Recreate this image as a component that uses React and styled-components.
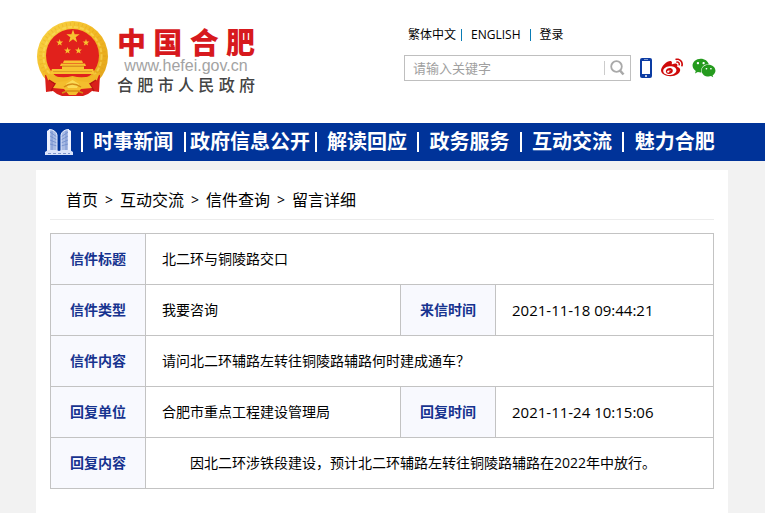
import React from "react";
import styled, { createGlobalStyle } from "styled-components";
import { FaWeibo, FaWeixin } from "react-icons/fa";

const GlobalStyle = createGlobalStyle`
  *, *::before, *::after { box-sizing: border-box; }
  body {
    margin: 0;
    background: #f2f2f2;
    color: #000;
    font-family: "Open Sans", "Noto Sans CJK SC", sans-serif;
    font-size: 14px;
  }
  a { color: inherit; text-decoration: none; }
`;

const Page = styled.div`
  display: flex;
  flex-direction: column;
  min-height: 100vh;
`;

const Container = styled.div`
  width: 100%;
  max-width: 1200px;
  margin: 0 auto;
  padding: 0 37px 0 36px;
`;

const Header = styled.header`
  background: #fff;
`;

const HeaderRow = styled(Container)`
  display: flex;
  justify-content: space-between;
  align-items: flex-start;
  padding-top: 20px;
  padding-bottom: 26px;
`;

const Brand = styled.a`
  display: flex;
  gap: 8px;
`;

const BrandText = styled.div`
  display: flex;
  flex-direction: column;
  width: 138px;
  padding-top: 6px;
`;

const SpreadText = styled.div`
  display: flex;
  justify-content: space-between;
  color: ${(p) => p.$color};
  font-family: "Noto Sans CJK SC", sans-serif;
  font-size: ${(p) => p.$size}px;
  font-weight: ${(p) => p.$weight};
  line-height: ${(p) => p.$line}px;
`;

const SiteAddress = styled.div`
  color: #a3a3a3;
  font: 16px/18px "Liberation Sans", Arial, sans-serif;
  text-align: center;
`;

const Tools = styled.div`
  display: flex;
  flex-direction: column;
  gap: 12px;
  width: 324px;
  padding-top: 7px;
`;

const QuickLinks = styled.nav`
  display: flex;
  align-items: center;
  padding-left: 4px;
  font-size: 12px;
  line-height: 16px;
`;

const QuickDivider = styled.span`
  width: 1px;
  height: 12px;
  margin: 0 9px 0 ${(p) => (p.$tight ? 5 : 9)}px;
  background: #0a7cb5;
`;

const ToolRow = styled.div`
  display: flex;
  align-items: center;
  gap: 9px;
`;

const SearchForm = styled.form`
  display: flex;
  align-items: center;
  width: 227px;
  height: 26px;
  border: 1px solid #bfbfbf;
`;

const SearchInput = styled.input`
  flex: 1;
  min-width: 0;
  padding: 0 8px;
  border: 0;
  outline: 0;
  background: transparent;
  font: 13px/20px "Open Sans", "Noto Sans CJK SC", sans-serif;
  &::placeholder { color: #a0a0a0; opacity: 1; }
`;

const SearchButton = styled.button`
  display: flex;
  align-items: center;
  justify-content: center;
  width: 26px;
  height: 14px;
  padding: 0;
  border: 0;
  border-left: 1px solid #ccc;
  background: transparent;
`;

const IconLink = styled.a`
  display: flex;
  color: ${(p) => p.$color};
`;

const MainNav = styled.nav`
  background: #039;
`;

const NavRow = styled(Container)`
  display: grid;
  grid-template-columns: 45px 1fr 131px repeat(4, 1fr);
  align-items: center;
  height: 38px;
  padding-right: 40px;
`;

const HomeLink = styled.a`
  display: flex;
  padding-left: 9px;
`;

const NavLink = styled.a`
  border-left: 2px solid #fff;
  color: #fff;
  font-size: 20px;
  font-weight: 700;
  line-height: 20px;
  text-align: center;
  white-space: nowrap;
`;

const Body = styled(Container)`
  display: flex;
  flex: 1;
  margin-top: 9px;
`;

const Panel = styled.main`
  flex: 1;
  padding: 0 14px 24px;
  background: #fff;
`;

const Breadcrumb = styled.nav`
  display: flex;
  gap: 7px;
  height: 50px;
  margin-bottom: 13px;
  padding: 18px 16px 0;
  border-bottom: 1px solid #ececec;
  font-size: 16px;
  line-height: 24px;
`;

const Arrow = styled.span`
  font-size: 14px;
`;

const Letter = styled.table`
  width: 100%;
  border-collapse: collapse;
  table-layout: fixed;
`;

const LabelCol = styled.col`
  width: 95px;
`;

const ValueCol = styled.col`
  width: 255px;
`;

const Label = styled.th`
  height: 51px;
  padding: 0;
  border: 1px solid #c3c3c3;
  background: #f8f9fe;
  color: #17338f;
  font-size: 14px;
  font-weight: 700;
  line-height: 20px;
`;

const Value = styled.td`
  padding: 0 16px;
  border: 1px solid #c3c3c3;
  line-height: 20px;
  text-indent: ${(p) => (p.$indent ? "2em" : "0")};
`;

const TimeValue = styled(Value)`
  font-size: 15px;
`;

const starPoints = (cx, cy, r) =>
  Array.from({ length: 10 }, (_, i) => {
    const a = (Math.PI / 5) * i - Math.PI / 2;
    const d = i % 2 ? r * 0.4 : r;
    return `${cx + d * Math.cos(a)},${cy + d * Math.sin(a)}`;
  }).join(" ");

const Emblem = () => (
  <svg width="73" height="77" viewBox="0 0 73 77" role="img" aria-label="国徽">
    <defs>
      <linearGradient id="gold" x1="0" y1="0" x2="1" y2="1">
        <stop offset="0" stopColor="#f9d84a" />
        <stop offset=".5" stopColor="#f2b823" />
        <stop offset="1" stopColor="#dfa11c" />
      </linearGradient>
    </defs>
    <circle cx="36.5" cy="36.5" r="35.5" fill="url(#gold)" />
    <circle cx="36.5" cy="36" r="32" fill="none" stroke="#d9981c" strokeWidth="3" strokeDasharray="1 3" opacity=".3" />
    <circle cx="36.5" cy="36" r="29" fill="none" stroke="#fbe268" strokeWidth="2" strokeDasharray="4 2" opacity=".5" />
    <circle cx="36.5" cy="35.5" r="26.5" fill="#e1211c" />
    <g fill="#f7c331">
      <polygon points={starPoints(37, 16.5, 7)} />
      <polygon points={starPoints(23.7, 22.7, 3.6)} />
      <polygon points={starPoints(50, 22.7, 3.6)} />
      <polygon points={starPoints(31.5, 30.7, 3.6)} />
      <polygon points={starPoints(42.5, 30.7, 3.6)} />
      <path d="M28 40.500H46L47 43H27ZM25 43.500H49L50 46H24ZM26 46H48V49H26ZM16 49H57L59 54H14Z" />
    </g>
    <path d="M26 46.200H48" stroke="#cf7d1b" />
    <path d="M17 51.500H56" stroke="#e0a026" />
    <path d="M9 55Q23 58 36.500 57Q50 58 64 55L63 72L56 71L52 74L47 76H26L21 74L17 71L10 72Z" fill="#d91f1b" />
    <path d="M9 52Q23 60 36.500 56Q50 60 64 52L61 60Q50 67 36.500 64Q23 67 12 60Z" fill="#f1b627" />
    <path d="M13 60L19 64L15 71M60 60L54 64L58 71" fill="none" stroke="#b51413" strokeWidth="1.500" />
    <path d="M21 62L31 61L36.500 57L42 61L52 62L56 68L45 69L40 75H33L28 69L17 68Z" fill="#f4bd2d" />
    <path d="M30 64L36.500 60L43 64L41 68H32Z" fill="#fbdc58" />
    <path d="M28 67Q36 61 45 67M26 73L31 71H42L47 73" fill="none" stroke="#d58c16" strokeWidth="1.500" />
  </svg>
);

const Towers = () => (
  <svg width="28" height="28" viewBox="0 0 28 28" aria-hidden="true">
    <path d="M2 3L5 1V24H2ZM26 3L23 1V24H26Z" fill="#eef2ff" />
    <path d="M5 1Q11 2 12 7V24H5ZM23 1Q17 2 16 7V24H23Z" fill="#a9bbe4" />
    <path d="M5 4L12 9M5 8L12 12M5 12L12 15M5 16L12 18M23 4L16 9M23 8L16 12M23 12L16 15M23 16L16 18M7 2V23M21 2V23" stroke="#6f8bcb" strokeWidth=".8" />
    <path d="M4 1.500Q11 2 12 7V24M24 1.500Q17 2 16 7V24" fill="none" stroke="#e8eeff" />
    <path d="M0 24L3 22H11L14 23L17 22H25L28 24V27H0Z" fill="#dbe4fa" />
    <path d="M3 25.500H25" stroke="#8097cd" strokeDasharray="3 2" />
  </svg>
);

const Magnifier = () => (
  <svg width="15" height="16" viewBox="0 0 15 16" aria-hidden="true">
    <circle cx="6.500" cy="6.500" r="5.300" fill="none" stroke="#a9a9a9" strokeWidth="1.800" />
    <path d="M10 10.500L13.500 14.500" stroke="#a9a9a9" strokeWidth="2.600" />
  </svg>
);

const Phone = () => (
  <svg width="12" height="20" viewBox="0 0 12 20" aria-hidden="true">
    <rect width="12" height="20" rx="2" fill="#0c3ca3" />
    <rect x="2" y="3" width="8" height="13" fill="#fff" />
    <path d="M4 1.500H8" stroke="#7f9ad0" />
    <circle cx="6" cy="18" r="1" fill="#fff" />
  </svg>
);

const navItems = ["时事新闻", "政府信息公开", "解读回应", "政务服务", "互动交流", "魅力合肥"];
const trail = ["首页", "互动交流", "信件查询", "留言详细"];

const Spread = ({ text, ...rest }) => (
  <SpreadText {...rest}>
    {[...text].map((c, i) => (
      <span key={i}>{c}</span>
    ))}
  </SpreadText>
);

export default function App() {
  return (
    <Page>
      <GlobalStyle />
      <Header>
        <HeaderRow>
          <Brand href="#">
            <Emblem />
            <BrandText>
              <Spread text="中国合肥" $color="#d7191d" $size={29} $weight={900} $line={31} />
              <SiteAddress>www.hefei.gov.cn</SiteAddress>
              <Spread text="合肥市人民政府" $color="#444" $size={16} $weight={500} $line={18} />
            </BrandText>
          </Brand>
          <Tools>
            <QuickLinks>
              <a href="#">繁体中文</a>
              <QuickDivider $tight />
              <a href="#">ENGLISH</a>
              <QuickDivider />
              <a href="#">登录</a>
            </QuickLinks>
            <ToolRow>
              <SearchForm onSubmit={(e) => e.preventDefault()}>
                <SearchInput type="text" aria-label="搜索" placeholder="请输入关键字" />
                <SearchButton type="submit" aria-label="搜索">
                  <Magnifier />
                </SearchButton>
              </SearchForm>
              <IconLink href="#" aria-label="手机版"><Phone /></IconLink>
              <IconLink href="#" aria-label="微博" $color="#cf0a0a"><FaWeibo size={22} /></IconLink>
              <IconLink href="#" aria-label="微信" $color="#259b1e"><FaWeixin size={24} /></IconLink>
            </ToolRow>
          </Tools>
        </HeaderRow>
      </Header>

      <MainNav>
        <NavRow>
          <HomeLink href="#" aria-label="首页"><Towers /></HomeLink>
          {navItems.map((item) => (
            <NavLink href="#" key={item}>{item}</NavLink>
          ))}
        </NavRow>
      </MainNav>

      <Body>
        <Panel>
          <Breadcrumb>
            {trail.map((item, i) => (
              <React.Fragment key={item}>
                {i > 0 && <Arrow>&gt;</Arrow>}
                <a href="#">{item}</a>
              </React.Fragment>
            ))}
          </Breadcrumb>
          <Letter>
            <colgroup>
              <LabelCol />
              <ValueCol />
              <LabelCol />
              <col />
            </colgroup>
            <tbody>
              <tr>
                <Label scope="row">信件标题</Label>
                <Value colSpan={3}>北二环与铜陵路交口</Value>
              </tr>
              <tr>
                <Label scope="row">信件类型</Label>
                <Value>我要咨询</Value>
                <Label scope="row">来信时间</Label>
                <TimeValue>2021-11-18 09:44:21</TimeValue>
              </tr>
              <tr>
                <Label scope="row">信件内容</Label>
                <Value colSpan={3}>请问北二环辅路左转往铜陵路辅路何时建成通车？</Value>
              </tr>
              <tr>
                <Label scope="row">回复单位</Label>
                <Value>合肥市重点工程建设管理局</Value>
                <Label scope="row">回复时间</Label>
                <TimeValue>2021-11-24 10:15:06</TimeValue>
              </tr>
              <tr>
                <Label scope="row">回复内容</Label>
                <Value colSpan={3} $indent>因北二环涉铁段建设，预计北二环辅路左转往铜陵路辅路在2022年中放行。</Value>
              </tr>
            </tbody>
          </Letter>
        </Panel>
      </Body>
    </Page>
  );
}
